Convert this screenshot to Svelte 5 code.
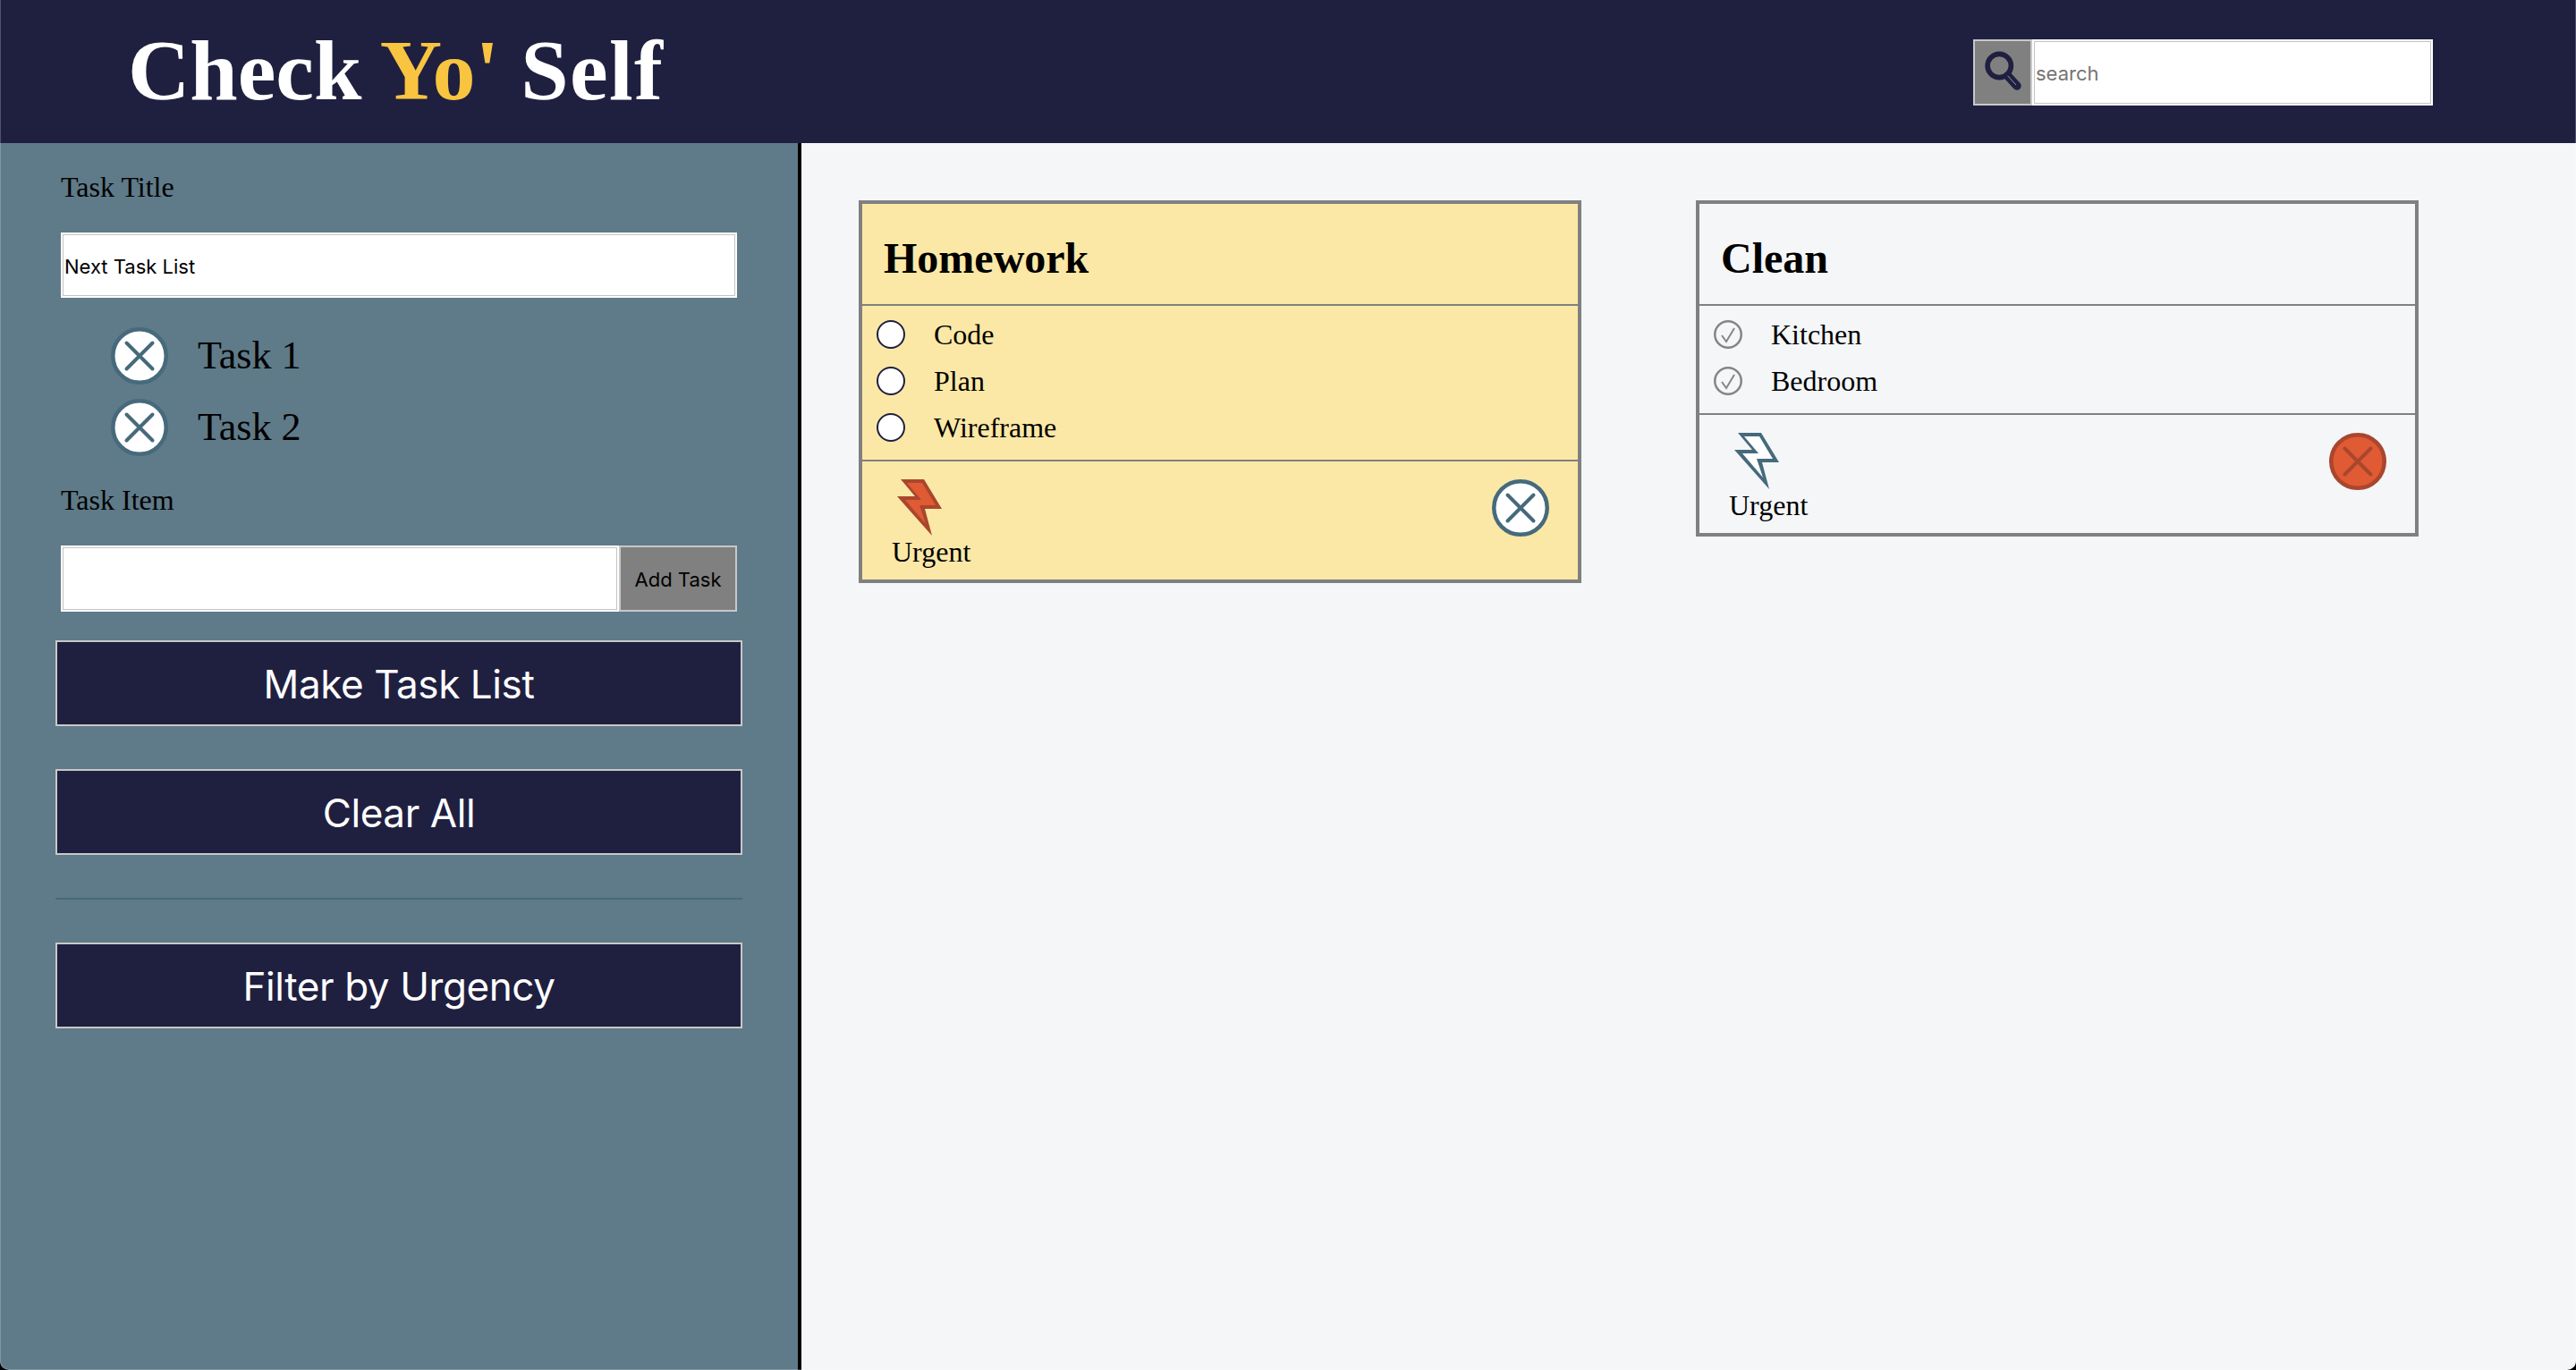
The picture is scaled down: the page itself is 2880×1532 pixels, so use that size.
<script>
  const cards = [
    { title: 'Homework', urgent: true, items: ['Code', 'Plan', 'Wireframe'], done: false },
    { title: 'Clean', urgent: false, items: ['Kitchen', 'Bedroom'], done: true }
  ];
  const draft = ['Task 1', 'Task 2'];
</script>

{#snippet closeIcon(danger)}
  <svg class="close" class:danger viewBox="0 0 64 64" aria-hidden="true">
    <circle cx="32" cy="32" r="29.75" />
    <path d="M17.5 17.5 46.5 46.5M46.5 17.5 17.5 46.5" />
  </svg>
{/snippet}

{#snippet bolt(active)}
  <svg class="bolt" class:active viewBox="23 16 50 63" aria-hidden="true">
    <polygon class="outer" points="27,16 53,16 73,49 54,49 62,79 23,35 43,35" />
    <polygon class="inner" points="34,20 51,20 66,45 48,45 55,66 32,39 50,39" />
  </svg>
{/snippet}

<div class="page">
  <header class="top">
    <h1>Check <span class="yo">Yo'</span> <span class="self">Self</span></h1>
    <form class="search">
      <button type="button" aria-label="Search">
        <svg viewBox="0 0 66 74" aria-hidden="true">
          <circle cx="29" cy="29" r="14" class="ring" />
          <path class="handle" d="M39 41 50 53" />
          <path class="glint" d="M39 41 49 52" />
        </svg>
      </button>
      <input type="text" placeholder="search" />
    </form>
  </header>

  <div class="body">
    <aside class="side">
      <label for="title">Task Title</label>
      <input id="title" class="field title" type="text" value="Next Task List" />
      <ul class="draft">
        {#each draft as task}
          <li>{@render closeIcon(false)}<span>{task}</span></li>
        {/each}
      </ul>
      <label for="item" class="second">Task Item</label>
      <div class="add">
        <input id="item" class="field" type="text" />
        <button type="button">Add Task</button>
      </div>
      <button type="button" class="big first">Make Task List</button>
      <button type="button" class="big">Clear All</button>
      <hr />
      <button type="button" class="big">Filter by Urgency</button>
    </aside>

    <main class="board">
      {#each cards as card}
        <article class="card" class:urgent={card.urgent}>
          <h2>{card.title}</h2>
          <ul class="items">
            {#each card.items as item}
              <li>
                {#if card.done}
                  <svg class="box" viewBox="0 0 32 32" aria-hidden="true">
                    <circle class="checked" cx="16" cy="16" r="14.75" />
                    <path d="M9 17 14 24 23 9" />
                  </svg>
                {:else}
                  <svg class="box" viewBox="0 0 32 32" aria-hidden="true">
                    <circle cx="16" cy="16" r="15" />
                  </svg>
                {/if}
                <span>{item}</span>
              </li>
            {/each}
          </ul>
          <footer>
            <div class="flag">
              {@render bolt(card.urgent)}
              <span>Urgent</span>
            </div>
            {@render closeIcon(!card.urgent)}
          </footer>
        </article>
      {/each}
    </main>
  </div>
</div>

<style>
  :global(body) {
    margin: 0;
    background: #f4f6f8;
    font-family: "Liberation Serif", "Times New Roman", serif;
    color: #000;
  }
  .page {
    position: relative;
    overflow: hidden;
    min-height: 1532px;
    display: flex;
    flex-direction: column;
    box-sizing: border-box;
  }
  .page::after {
    content: "";
    position: absolute;
    inset: -2px 0 0;
    pointer-events: none;
    border-radius: 0 0 10px 10px;
    box-shadow: inset 0 0 0 1px rgba(255, 255, 255, 0.22), 0 0 0 20px #000;
  }
  .top {
    height: 160px;
    background: #1f2040;
    display: flex;
    align-items: center;
    justify-content: space-between;
    padding: 0 160px 0 143px;
    flex: none;
  }
  h1 {
    margin: -3px 0 0;
    color: #fff;
    font-size: 96px;
    line-height: 160px;
    font-weight: 700;
  }
  .yo {
    color: #f9c440;
  }
  .self {
    letter-spacing: 1.4px;
  }
  .search {
    display: flex;
    height: 74px;
    margin: 2px 0 0;
    width: 514px;
  }
  .search button {
    width: 66px;
    padding: 0;
    background: #808080;
    border: 2px solid #c8c8c8;
    box-sizing: border-box;
  }
  .search button svg {
    display: block;
    width: 100%;
    height: 100%;
  }
  .ring {
    fill: none;
    stroke: #1f2040;
    stroke-width: 6;
  }
  .handle {
    stroke: #1f2040;
    stroke-width: 10;
    stroke-linecap: round;
  }
  .glint {
    stroke: #a0a0a8;
    stroke-width: 1;
  }
  .search input {
    flex: 1;
    min-width: 0;
    box-sizing: border-box;
    border: 2px solid #fff;
    box-shadow: inset 0 0 0 1px #c4c4c4;
    background: #fff;
    padding: 2px 0 0 2px;
    font: 22px Inter, "Noto Sans", sans-serif;
  }
  .search input::placeholder {
    color: #757575;
  }
  .body {
    flex: 1;
    display: flex;
  }
  .side {
    flex: none;
    box-sizing: border-box;
    background: #5f7a88;
    border-right: 4px solid #000;
    width: 896px;
    padding: 31px 0 0 62px;
  }
  label {
    display: block;
    margin-left: 6px;
    font-size: 32px;
    line-height: 36px;
  }
  .field {
    box-sizing: border-box;
    height: 73px;
    border: 2px solid #fff;
    box-shadow: inset 0 0 0 1px #c4c4c4;
    background: #fff;
    padding: 2px 0 0 2px;
    font: 22px Inter, "Noto Sans", sans-serif;
    color: #000;
    display: block;
  }
  .title {
    width: 756px;
    margin: 33px 0 25px 6px;
  }
  .draft {
    list-style: none;
    margin: 0 0 23px;
    padding: 0 0 0 62px;
  }
  .draft li {
    height: 80px;
    display: flex;
    align-items: center;
    gap: 33px;
    font-size: 44px;
  }
  .draft span {
    margin-bottom: 2px;
  }
  .close {
    width: 64px;
    height: 64px;
    flex: none;
    display: block;
  }
  .close circle {
    fill: #fff;
    stroke: #466a7c;
    stroke-width: 4.5;
  }
  .close path {
    fill: none;
    stroke: #466a7c;
    stroke-width: 4;
    stroke-linecap: round;
  }
  .close.danger circle {
    fill: #e05a33;
    stroke: #a9462e;
  }
  .close.danger path {
    stroke: #a9462e;
  }
  .add {
    display: flex;
    width: 756px;
    margin: 33px 0 32px 6px;
    height: 74px;
  }
  .add .field {
    flex: 1;
    height: auto;
    min-width: 0;
  }
  .add button {
    width: 132px;
    background: #808080;
    border: 2px solid #c8c8c8;
    box-sizing: border-box;
    padding: 2px 0 0;
    font: 22px Inter, "Noto Sans", sans-serif;
    color: #000;
  }
  .big {
    display: block;
    width: 768px;
    height: 96px;
    box-sizing: border-box;
    background: #1f2040;
    color: #fff;
    border: 2px solid #c8c8c8;
    font: 44px Inter, "Noto Sans", sans-serif;
    letter-spacing: -0.4px;
    margin: 0 0 48px;
    padding: 2px 0 0;
  }
  hr {
    width: 768px;
    height: 2px;
    margin: 0 0 48px;
    border: 0;
    background: #466a7c;
  }
  .board {
    flex: 1;
    display: flex;
    align-items: flex-start;
    gap: 128px;
    padding: 64px 0 0 64px;
  }
  .card {
    width: 808px;
    box-sizing: border-box;
    border: 4px solid #808080;
  }
  .card.urgent {
    background: #fbe8a6;
  }
  h2 {
    margin: 0;
    box-sizing: border-box;
    height: 114px;
    padding: 7px 0 0 24px;
    font-size: 48px;
    line-height: 107px;
    border-bottom: 2px solid #808080;
  }
  .items {
    list-style: none;
    margin: 0;
    padding: 6px 0 10px 16px;
    border-bottom: 2px solid #808080;
  }
  .items li {
    height: 52px;
    display: flex;
    align-items: center;
    gap: 32px;
    font-size: 32px;
  }
  .box {
    width: 32px;
    height: 32px;
    flex: none;
  }
  .box circle {
    fill: #fff;
    stroke: #1f2040;
    stroke-width: 2;
  }
  .box circle.checked {
    fill: none;
    stroke: #858585;
    stroke-width: 2.5;
  }
  .box path {
    fill: none;
    stroke: #858585;
    stroke-width: 2;
  }
  footer {
    display: flex;
    justify-content: space-between;
    align-items: flex-start;
    padding: 20px 32px 13px 33px;
  }
  .flag {
    font-size: 32px;
    line-height: 36px;
  }
  .flag span {
    display: block;
  }
  .bolt {
    display: block;
    width: 50px;
    height: 63px;
    margin-left: 6px;
  }
  .outer {
    fill: #466a7c;
  }
  .inner {
    fill: #fff;
  }
  .active .outer {
    fill: #a9462e;
  }
  .active .inner {
    fill: #e05a33;
  }
</style>
